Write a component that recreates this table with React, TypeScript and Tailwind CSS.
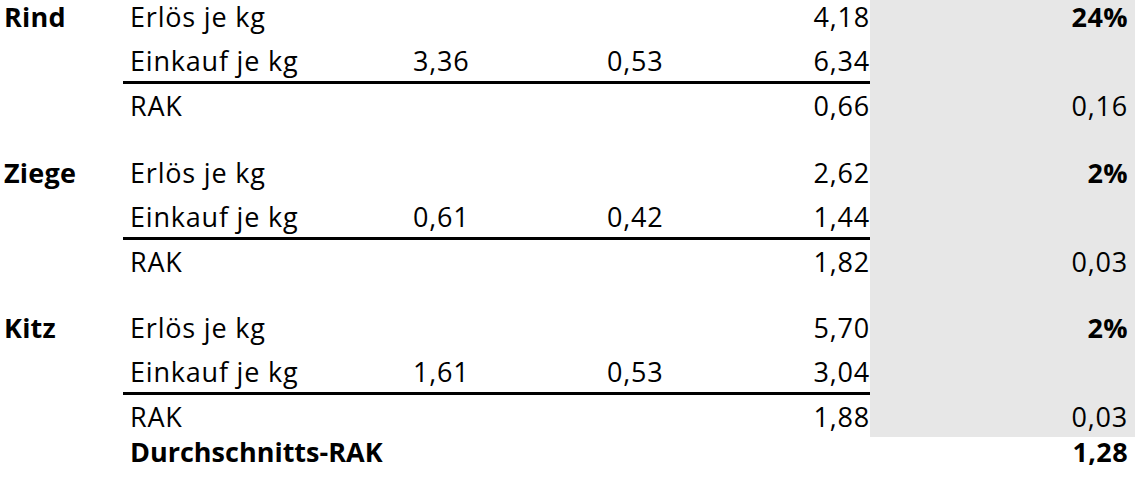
const blocks = [
  { name: "Rind", erloes: "4,18", einkauf: ["3,36", "0,53", "6,34"], rak: "0,66", share: "24%", weighted: "0,16" },
  { name: "Ziege", erloes: "2,62", einkauf: ["0,61", "0,42", "1,44"], rak: "1,82", share: "2%", weighted: "0,03" },
  { name: "Kitz", erloes: "5,70", einkauf: ["1,61", "0,53", "3,04"], rak: "1,88", share: "2%", weighted: "0,03" },
]

const cols = "grid grid-cols-[123px_277px_195px_205px_70px_265px]"

function Block({ b }: { b: (typeof blocks)[number] }) {
  return (
    <div>
      <div className={`${cols} h-[44px]`}>
        <div className="pl-[4px] pt-[3px] font-bold tracking-[0.2px]">{b.name}</div>
        <div className="pl-[7px] pt-[3px]">Erlös je kg</div>
        <div />
        <div />
        <div className="pt-[3px] text-right">{b.erloes}</div>
        <div className="bg-[#e7e7e7] pr-[7px] pt-[3px] text-right font-bold tracking-[0.4px]">{b.share}</div>
      </div>
      <div className={`${cols} h-[40px]`}>
        <div />
        <div className="border-b-[3px] border-black pl-[7px] pt-[3px]">Einkauf je kg</div>
        <div className="border-b-[3px] border-black pl-[13px] pt-[3px]">{b.einkauf[0]}</div>
        <div className="border-b-[3px] border-black pl-[12px] pt-[3px]">{b.einkauf[1]}</div>
        <div className="border-b-[3px] border-black pt-[3px] text-right">{b.einkauf[2]}</div>
        <div className="bg-[#e7e7e7]" />
      </div>
      <div className={`${cols} h-[42px]`}>
        <div />
        <div className="pl-[7px] pt-[8px]">RAK</div>
        <div />
        <div />
        <div className="pt-[8px] text-right">{b.rak}</div>
        <div className="bg-[#e7e7e7] pr-[7px] pt-[8px] text-right">{b.weighted}</div>
      </div>
    </div>
  )
}

export default function App() {
  return (
    <div className="h-[480px] w-[1137px] overflow-hidden bg-white font-['Open_Sans',sans-serif] text-[27px] leading-[27px] tracking-[0.8px] text-black">
      {blocks.map((b, i) => (
        <div key={b.name}>
          <Block b={b} />
          {i < blocks.length - 1 && (
            <div className={`${cols} h-[29.5px]`}>
              <div />
              <div />
              <div />
              <div />
              <div />
              <div className="bg-[#e7e7e7]" />
            </div>
          )}
        </div>
      ))}
      <div className={`${cols} h-[43px]`}>
        <div />
        <div className="pl-[7px] pt-[1px] font-bold tracking-normal">Durchschnitts-RAK</div>
        <div />
        <div />
        <div />
        <div className="pr-[7px] pt-[1px] text-right font-bold tracking-[0.4px]">1,28</div>
      </div>
    </div>
  )
}
